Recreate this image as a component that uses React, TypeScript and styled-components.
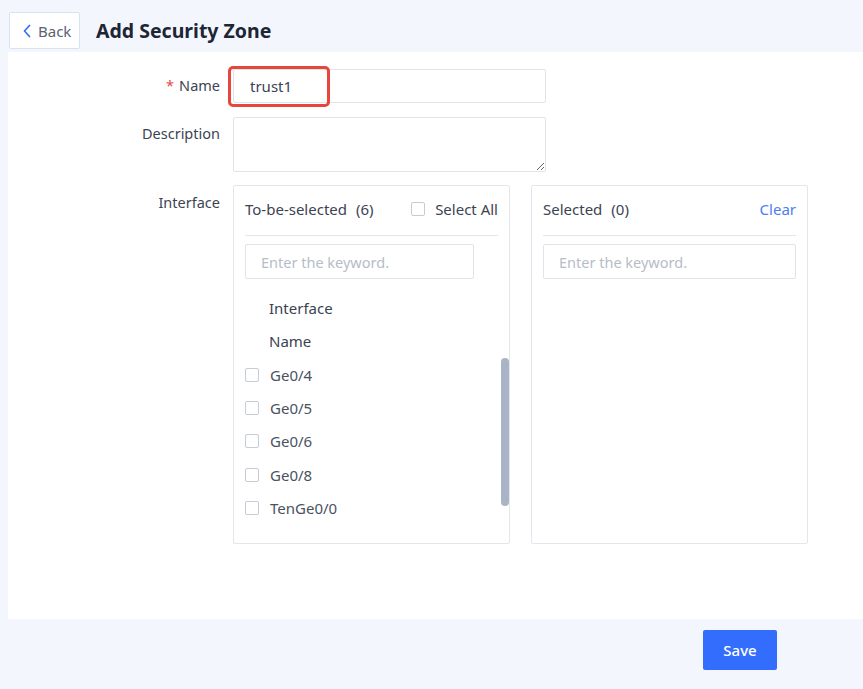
import React from 'react';
import styled, { createGlobalStyle } from 'styled-components';

const GlobalStyle = createGlobalStyle`
  html, body {
    margin: 0;
    padding: 0;
    background: #f3f7fd;
    font-family: "Noto Sans", "Open Sans", sans-serif;
  }
  * { box-sizing: border-box; }
`;

const interfaces = ['Ge0/4', 'Ge0/5', 'Ge0/6', 'Ge0/8', 'TenGe0/0'];

function App() {
  return (
    <Page>
      <GlobalStyle />
      <Header>
        <BackButton>
          <svg width="10" height="16" viewBox="0 0 10 16">
            <path d="M7.5 2.5 L2.5 8 L7.5 13.5" fill="none" stroke="#3b6ef6" strokeWidth="1.7" strokeLinecap="round" strokeLinejoin="round" />
          </svg>
          Back
        </BackButton>
        <Title>Add Security Zone</Title>
      </Header>

      <Card>
        <Form>
          <Label><Required>*</Required>Name</Label>
          <Field>
            <Input defaultValue="trust1" />
            <Highlight />
          </Field>

          <Label>Description</Label>
          <Field>
            <TextArea />
          </Field>

          <Label>Interface</Label>
          <Transfer>
            <Panel>
              <PanelHead>
                <span>To-be-selected<Count>(6)</Count></span>
                <CheckLabel>
                  <Box />
                  Select All
                </CheckLabel>
              </PanelHead>
              <Search placeholder="Enter the keyword." $width={229} />
              <List>
                <HeadCell>Interface</HeadCell>
                <HeadCell>Name</HeadCell>
                {interfaces.map((name) => (
                  <Item key={name}>
                    <Box />
                    {name}
                  </Item>
                ))}
                <Thumb />
              </List>
            </Panel>

            <Panel>
              <PanelHead>
                <span>Selected<Count>(0)</Count></span>
                <ClearLink>Clear</ClearLink>
              </PanelHead>
              <Search placeholder="Enter the keyword." />
            </Panel>
          </Transfer>
        </Form>
      </Card>

      <Footer>
        <SaveButton>Save</SaveButton>
      </Footer>
    </Page>
  );
}

export default App;

const Page = styled.div`
  width: 863px;
  height: 689px;
  display: flex;
  flex-direction: column;
  background: #f3f7fd;
`;

const Header = styled.div`
  height: 52px;
  display: flex;
  align-items: flex-start;
  gap: 16px;
  padding: 12px 0 0 9px;
`;

const BackButton = styled.button`
  width: 71px;
  height: 37px;
  display: flex;
  align-items: center;
  gap: 6px;
  padding: 0 0 0 12px;
  background: #fff;
  border: 1px solid #d9e2f0;
  border-radius: 2px;
  font-family: inherit;
  font-size: 15px;
  color: #5a6272;
`;

const Title = styled.h1`
  margin: 0;
  height: 37px;
  line-height: 37px;
  font-size: 19.5px;
  font-weight: 700;
  color: #1e2535;
`;

const Card = styled.div`
  margin-left: 8px;
  height: 567px;
  background: #fff;
  padding-top: 17px;
`;

const Form = styled.div`
  display: grid;
  grid-template-columns: 212px auto;
  column-gap: 13px;
  row-gap: 14px;
  align-items: start;
`;

const Label = styled.div`
  line-height: 33px;
  text-align: right;
  font-size: 14.5px;
  color: #3c4453;
`;

const Required = styled.span`
  color: #e8453c;
  margin-right: 5px;
`;

const Field = styled.div`
  position: relative;
  width: 313px;
`;

const Input = styled.input`
  display: block;
  width: 313px;
  height: 34px;
  padding: 0 16px;
  border: 1px solid #dfe4eb;
  border-radius: 2px;
  font-family: inherit;
  font-size: 15px;
  color: #3c4453;
  outline: none;
`;

const Highlight = styled.div`
  position: absolute;
  left: -5px;
  top: -3px;
  width: 102px;
  height: 41px;
  border: 3px solid #e8453c;
  border-radius: 5px;
  pointer-events: none;
`;

const TextArea = styled.textarea`
  display: block;
  width: 313px;
  height: 55px;
  border: 1px solid #dfe4eb;
  border-radius: 2px;
  font-family: inherit;
  resize: vertical;
  outline: none;
`;

const Transfer = styled.div`
  display: flex;
  gap: 21px;
  margin-top: -1px;
`;

const Panel = styled.div`
  position: relative;
  width: 277px;
  height: 359px;
  border: 1px solid #e3e6eb;
  border-radius: 2px;
  padding: 0 11px 0 11px;
`;

const PanelHead = styled.div`
  height: 50px;
  display: flex;
  align-items: center;
  justify-content: space-between;
  border-bottom: 1px solid #e3e6eb;
  padding-bottom: 3px;
  font-size: 15px;
  color: #3c4453;
`;

const Count = styled.span`
  margin-left: 9px;
`;

const CheckLabel = styled.label`
  display: flex;
  align-items: center;
  gap: 10px;
`;

const Box = styled.span`
  display: inline-block;
  width: 14px;
  height: 14px;
  border: 1px solid #c5ccd6;
  border-radius: 2px;
  background: #fff;
  flex-shrink: 0;
`;

const ClearLink = styled.a`
  color: #4b7cf3;
  cursor: pointer;
`;

const Search = styled.input<{ $width?: number }>`
  display: block;
  margin-top: 8px;
  width: ${(p) => (p.$width ? `${p.$width}px` : '100%')};
  height: 35px;
  padding: 0 15px;
  border: 1px solid #dfe4eb;
  border-radius: 2px;
  font-family: inherit;
  font-size: 14.5px;
  outline: none;
  &::placeholder {
    color: #b6bdc8;
  }
`;

const List = styled.div`
  margin-top: 13px;
  display: flex;
  flex-direction: column;
`;

const HeadCell = styled.div`
  height: 33px;
  line-height: 33px;
  padding-left: 24px;
  font-size: 15px;
  color: #3a4252;
`;

const Item = styled.div`
  height: 33.3px;
  display: flex;
  align-items: center;
  gap: 11px;
  font-size: 15px;
  color: #4a5262;
`;

const Thumb = styled.div`
  position: absolute;
  right: 0px;
  top: 172px;
  width: 8px;
  height: 148px;
  border-radius: 4px;
  background: #a9b4c6;
`;

const Footer = styled.div`
  flex: 1;
  display: flex;
  justify-content: flex-end;
  padding: 11px 86px 0 0;
`;

const SaveButton = styled.button`
  width: 74px;
  height: 40px;
  border: none;
  border-radius: 2px;
  background: #336dfd;
  color: #fff;
  font-family: inherit;
  font-size: 15px;
  font-weight: 500;
`;
